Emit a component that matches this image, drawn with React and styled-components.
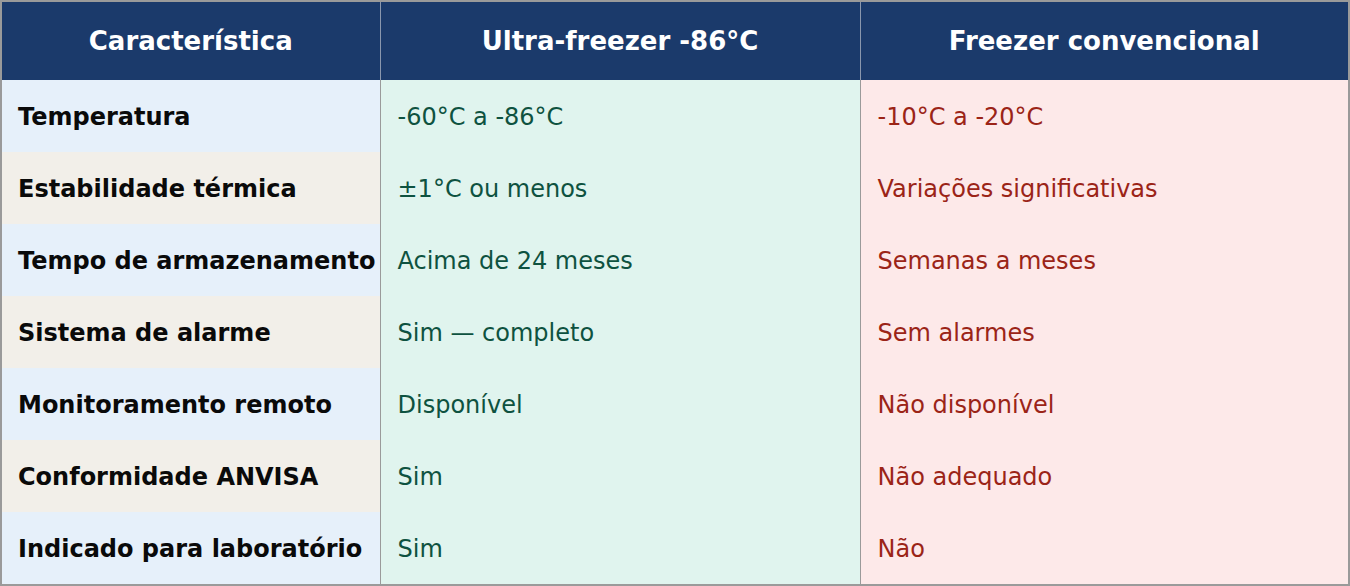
import styled, { createGlobalStyle } from "styled-components";

const GlobalStyle = createGlobalStyle`
  html, body {
    margin: 0;
    padding: 0;
    background: #ffffff;
  }
  body {
    font-family: "DejaVu Sans", "Liberation Sans", sans-serif;
  }
`

const Frame = styled.div`
  width: 1350px;
  height: 586px;
  box-sizing: border-box;
  border: 2px solid #9a9a9a;
  overflow: hidden;
`

const Table = styled.table`
  width: 100%;
  border-collapse: collapse;
  table-layout: fixed;
  font-size: 24px;
`

const Head = styled.th`
  background: #1b3a6b;
  color: #ffffff;
  font-size: 26px;
  font-weight: bold;
  height: 78px;
  padding: 0;
  text-align: center;
  border-left: 1px solid #8a97ad;
  &:first-child {
    border-left: none;
  }
`

const Cell = styled.td`
  height: 72px;
  padding: 2px 0 0 17px;
  box-sizing: border-box;
  white-space: nowrap;
  background: ${p => p.$bg};
  color: ${p => p.$color};
  font-weight: ${p => (p.$bold ? "bold" : "normal")};
  border-left: 1px solid #9a9a9a;
  &:first-child {
    border-left: none;
    padding-left: 16px;
  }
`

const rows = [
  ["Temperatura", "-60°C a -86°C", "-10°C a -20°C"],
  ["Estabilidade térmica", "±1°C ou menos", "Variações significativas"],
  ["Tempo de armazenamento", "Acima de 24 meses", "Semanas a meses"],
  ["Sistema de alarme", "Sim — completo", "Sem alarmes"],
  ["Monitoramento remoto", "Disponível", "Não disponível"],
  ["Conformidade ANVISA", "Sim", "Não adequado"],
  ["Indicado para laboratório", "Sim", "Não"],
]

export default function App() {
  return (
    <>
      <GlobalStyle />
      <Frame>
        <Table>
          <colgroup>
            <col style={{ width: 378 }} />
            <col style={{ width: 480 }} />
            <col />
          </colgroup>
          <thead>
            <tr>
              <Head>Característica</Head>
              <Head>Ultra-freezer -86°C</Head>
              <Head>Freezer convencional</Head>
            </tr>
          </thead>
          <tbody>
            {rows.map((r, i) => (
              <tr key={r[0]}>
                <Cell $bold $bg={i % 2 === 0 ? "#e6f0fa" : "#f2efe9"} $color="#0a0a0a">{r[0]}</Cell>
                <Cell $bg="#e0f4ee" $color="#0e5240">{r[1]}</Cell>
                <Cell $bg="#fde9e9" $color="#9b2417">{r[2]}</Cell>
              </tr>
            ))}
          </tbody>
        </Table>
      </Frame>
    </>
  )
}
